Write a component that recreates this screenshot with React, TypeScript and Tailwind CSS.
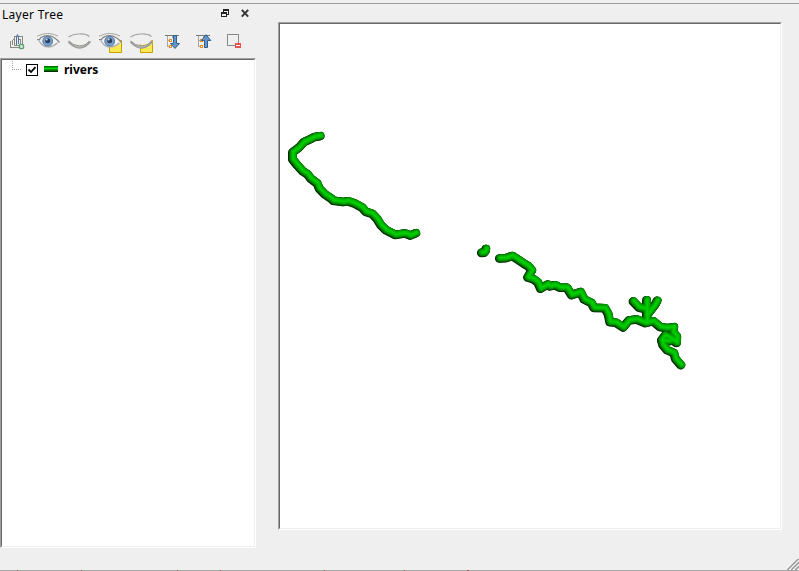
import React from "react";

const rivers = [
  "M320.3 136L315 136.7L310 139.3L304 142L299.3 147.3L292.7 152.3L292.7 159.3L297.3 165L302.7 171L307.7 174.3L310.7 178.3L317.3 183.3L319.3 188.3L325 194.3L331.7 198.7L333.3 200.5L343.3 201.9L347.7 201L355 203.5L362.3 207.5L366 211.7L372.3 213.6L377.3 219L381 225L386 230L395.3 234.7L405 233.2L410.3 235.4L416 233",
  "M481.7 252.7L484.5 252.5L485.8 250.5L486 248.8",
  "M499.7 258.3L506 258L512.3 255.8L517.7 259.3L523.3 263L528.3 266L532 270.3L527.8 277.3L534 279.3L538 282.3L540.7 288.5L547.7 284.4L550 286.2L555 285L560 287.5L567 287.5L571.7 295L580.7 292L584.3 299.3L591.7 303L594 307.7L605 308L608.3 314L610 322L616 322.5L623.3 327.3L629 320.4L636.7 319.3L645.7 323L653.3 321L660 326.7L667 328L674 327L673 332L677 336.5L676.7 342.8L671 338.5L665 335.5L661.7 340L663 345L667.3 350L674 353L675.7 359L681 365",
  "M662 341L670 341",
  "M633.3 301.3L639 307.3L646 309",
  "M657.3 300.7L655 305L647.3 315",
  "M646.7 300L646.7 321",
];

const shades = [
  { c: "#001c00", w: 8.6, x: -0.4, y: 0.2 },
  { c: "#004200", w: 8.2, x: 0.1, y: 0 },
  { c: "#007000", w: 7.6, x: 0.4, y: -0.3 },
  { c: "#009000", w: 6.6, x: 0.7, y: -0.5 },
  { c: "#00a600", w: 5.2, x: 0.8, y: -0.6 },
  { c: "#00bc00", w: 3.6, x: 0.7, y: -0.5 },
  { c: "#00d000", w: 1.6, x: 0.6, y: -0.5 },
];

function MapDrawing() {
  return (
    <svg className="block" width="500" height="504" viewBox="280 24 500 504" fill="none" strokeLinecap="round" strokeLinejoin="round">
      {shades.map((s) => (
        <g key={s.c} stroke={s.c} strokeWidth={s.w} transform={`translate(${s.x} ${s.y})`}>
          {rivers.map((d) => (
            <path key={d} d={d} />
          ))}
        </g>
      ))}
    </svg>
  );
}

function OpenEye({ note = false }: { note?: boolean }) {
  return (
    <svg width="25" height="24" viewBox="0 0 25 24" fill="none">
      {note && <path d="M11.5 10.5H23.5V22.5H11.5Z" fill="#fce94f" stroke="#c4a000" />}
      <path d="M2 9.5Q5 5.5 12 5.5Q18 5.5 23 13Q17 18 11 17Q6 16 2 9.5Z" fill="#f3f3f2" />
      <path d="M1 6.2Q12 .8 22 6" stroke="#a5a7a4" />
      <path d="M1 9.6H3.3Q6 5.7 12 5.7Q18 6 23.5 12.5" stroke="#858784" strokeWidth="1.3" />
      <path d="M3 10.5Q6 17 12 17Q17 17 21.5 12.7" stroke="#a7a9a6" strokeWidth="1.2" />
      <circle cx="11.7" cy="11.2" r="4.9" fill="#7c9fca" stroke="#547aa9" />
      <circle cx="11.7" cy="10.8" r="2.5" fill="#27405e" />
      <circle cx="10.7" cy="9.5" r="1" fill="#c4d5e8" />
    </svg>
  );
}

function ClosedEye({ note = false }: { note?: boolean }) {
  return (
    <svg width="27" height="24" viewBox="0 0 27 24" fill="none">
      {note && <path d="M11.5 10.5H23.5V22.5H11.5Z" fill="#fce94f" stroke="#c4a000" />}
      <path d="M2 7Q12 1 23 6L22 12Q13 18 2 11Z" fill="#efefef" />
      <path d="M1.5 7Q6 3.9 12 4Q19 3.5 22.5 6.5" stroke="#a5a7a4" strokeWidth="1.2" />
      <path d="M1.5 11.5Q6 17 12.5 17Q19 17 23 11.5" stroke="#b4b6b3" strokeWidth="2.6" />
      <path d="M2 12Q7 18.2 12.5 18.2Q18 18.2 23.5 11.5M1.5 11Q6 15.8 12.5 15.8Q19 15.8 22.5 11" stroke="#888a85" strokeWidth=".8" />
    </svg>
  );
}

function GroupIcon() {
  return (
    <svg width="17" height="18" viewBox="0 0 17 18" fill="none" shapeRendering="crispEdges">
      <path d="M4.5 3.5H12.5V11M2.5 6.5V12M2.5 6.5H5M8 6.5H10.5V11M.5 8V14.5H9M4.5 3V12.5H9" stroke="#888a85" />
      <path d="M6.5 12V4L7.5 1.5L8.5 4V11" stroke="#4d7094" shapeRendering="auto" />
      <rect x="9.5" y="11.5" width="4" height="4" rx="1" fill="#e4f4e3" stroke="#5fa175" strokeWidth="1.5" shapeRendering="auto" />
    </svg>
  );
}

function TreeArrow({ up = false }: { up?: boolean }) {
  return (
    <svg width="17" height="17" viewBox="0 0 17 17" fill="none">
      <g shapeRendering="crispEdges">
        <path d="M0 1.5H14" stroke="#777974" />
        <path d="M2.5 2V12.5H5M2.5 6.5H5M7.5 2V4" stroke="#a5a7a4" />
        <rect x="4.5" y="5.5" width="2" height="2" fill="white" stroke="#f5881c" />
        <rect x="4.5" y="11.5" width="2" height="2" fill="white" stroke="#f5881c" />
      </g>
      <path d={up ? "M8.5 13.5V6.5H5.5L10 .7L14.8 6.5H11.5V13.5Z" : "M8.5 1.5H11.5V9.5H14.5L10 14.5L5.5 9.5H8.5Z"} fill="#6295c9" stroke="#315f8e" />
    </svg>
  );
}

function RemoveIcon() {
  return (
    <svg width="15" height="15" viewBox="0 0 15 15" fill="none" shapeRendering="crispEdges">
      <rect x=".5" y=".5" width="11" height="11" stroke="#888a85" />
      <rect x="8" y="9" width="6" height="5" fill="#ef4e51" />
      <path d="M9 11.5H13" stroke="white" />
    </svg>
  );
}

function LayerPanel() {
  return (
    <section className="flex w-64 shrink-0 flex-col">
      <header className="flex h-[22px] items-start pl-[2px] pt-[3px] text-black">
        <span className="w-[218px] text-[12px] leading-4 tracking-[0.3px]">Layer Tree</span>
        <svg className="mt-[1px]" width="30" height="11" viewBox="0 0 30 11" fill="none">
          <g shapeRendering="crispEdges" stroke="#222">
            <path d="M3.5 4V1.5H8.5V6.5H7M3 2.5H9" />
            <rect x="1.5" y="4.5" width="5" height="4" />
            <path d="M1 5.5H7" />
          </g>
          <path d="M21.8 1.8L28.2 8.7M28.2 1.8L21.8 8.7" stroke="#333" strokeWidth="1.9" />
        </svg>
      </header>
      <div className="flex h-8 items-center pl-[10px]">
        <div className="w-[26px] pb-[1px]"><GroupIcon /></div>
        <div className="w-[31px]"><OpenEye /></div>
        <div className="w-[31px]"><ClosedEye /></div>
        <div className="w-[31px]"><OpenEye note /></div>
        <div className="w-[36px]"><ClosedEye note /></div>
        <div className="w-[31px]"><TreeArrow /></div>
        <div className="w-[31px]"><TreeArrow up /></div>
        <div className="pb-[2px]"><RemoveIcon /></div>
      </div>
      <div className="h-[490px] border border-b-white border-l-[#a0a0a0] border-r-white border-t-[#a0a0a0]">
        <div className="h-full border border-b-[#eee] border-l-[#696969] border-r-[#eee] border-t-[#696969] bg-white">
          <div className="flex h-[19px] items-center pl-[10px]">
            <svg width="11" height="19" viewBox="0 0 11 19" fill="none" shapeRendering="crispEdges">
              <path d="M.5 1V10M0 9.5H10" stroke="#a0a0a0" strokeDasharray="1 1" />
            </svg>
            <svg className="ml-[3px]" width="12" height="12" viewBox="0 0 12 12" fill="none">
              <rect x=".5" y=".5" width="11" height="11" fill="white" stroke="black" />
              <path d="M2.5 5.5L5 8L9.5 3.2" stroke="black" strokeWidth="1.8" />
            </svg>
            <div className="mb-[1px] ml-[6px] h-[6px] w-[14px] bg-linear-to-b from-[#005000] via-[#00e000] via-40% to-[#001c00]" />
            <span className="ml-[6px] text-[12px] font-bold leading-4 text-black">rivers</span>
          </div>
        </div>
      </div>
    </section>
  );
}

export default function App() {
  return (
    <main className="flex h-[571px] w-[799px] flex-col overflow-hidden bg-[#efefef] pt-[3px] font-['Noto_Sans',sans-serif]">
      <div className="h-px shrink-0 bg-[#a0a0a0]" />
      <div className="flex h-[555px] shrink-0">
        <LayerPanel />
        <section className="ml-[22px] mt-[18px] h-[508px] w-[504px] border border-b-white border-l-[#a0a0a0] border-r-white border-t-[#a0a0a0]">
          <div className="h-full border border-b-[#eee] border-l-[#696969] border-r-[#eee] border-t-[#696969] bg-white">
            <MapDrawing />
          </div>
        </section>
      </div>
      <footer className="flex h-3 shrink-0 flex-col items-end">
        <svg width="12" height="11" viewBox="0 0 12 11" fill="none">
          <path d="M0 11L12 -1M4 11L12 3M8 11L12 7" stroke="#999" strokeWidth="1.8" />
          <path d="M-1.5 11L12 -2.5M2.5 11L12 1.5M6.5 11L12 5.5" stroke="white" />
        </svg>
        <svg className="bg-[#a8a8a8]" width="799" height="1" viewBox="0 0 799 1" shapeRendering="crispEdges">
          <path d="M17 .5H18M81 .5H82M177 .5H178M220 .5H221M324 .5H325M404 .5H405M467 .5H469" stroke="#a94858" />
        </svg>
      </footer>
    </main>
  );
}
